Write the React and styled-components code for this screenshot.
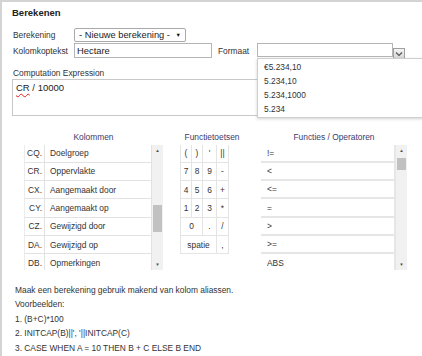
import styled, { createGlobalStyle } from 'styled-components';

const GlobalStyle = createGlobalStyle`
  html, body {
    margin: 0;
    padding: 0;
    background: #fff;
  }
  body {
    font-family: "Liberation Sans", Arial, sans-serif;
    font-size: 8.4px;
    color: #333;
  }
`;

const columns = [
  ['CQ.', 'Doelgroep'],
  ['CR.', 'Oppervlakte'],
  ['CX.', 'Aangemaakt door'],
  ['CY.', 'Aangemaakt op'],
  ['CZ.', 'Gewijzigd door'],
  ['DA.', 'Gewijzigd op'],
  ['DB.', 'Opmerkingen'],
];

const keys = [
  ['(', 1], [')', 1], ["'", 1], ['||', 1],
  ['7', 1], ['8', 1], ['9', 1], ['-', 1],
  ['4', 1], ['5', 1], ['6', 1], ['+', 1],
  ['1', 1], ['2', 1], ['3', 1], ['*', 1],
  ['0', 2], ['.', 1], ['/', 1],
  ['spatie', 3], [',', 1],
];

const operators = ['!=', '<', '<=', '=', '>', '>=', 'ABS'];

const formats = ['€5.234,10', '5.234,10', '5.234,1000', '5.234'];

function ScrollBar({ thumbTop, thumbHeight }) {
  return (
    <Track>
      <Arrow>▲</Arrow>
      <Thumb $top={thumbTop} $height={thumbHeight} />
      <Spacer />
      <Arrow>▼</Arrow>
    </Track>
  );
}

function App() {
  return (
    <>
      <GlobalStyle />
      <Panel>
        <Title>Berekenen</Title>

        <Form>
          <Row>
            <Label>Berekening</Label>
            <Select>
              <span>- Nieuwe berekening -</span>
              <Caret>▼</Caret>
            </Select>
          </Row>
          <Row $high>
            <Label>Kolomkoptekst</Label>
            <TextInput>Hectare</TextInput>
            <FormatLabel>Formaat</FormatLabel>
            <Combo>
              <ComboInput />
              <ComboButton>
                <svg width="8" height="6" viewBox="0 0 8 6">
                  <path d="M1 1.5 L4 4.5 L7 1.5" fill="none" stroke="#555" strokeWidth="1.2" />
                </svg>
              </ComboButton>
              <Dropdown>
                {formats.map((f) => (
                  <Option key={f}>{f}</Option>
                ))}
              </Dropdown>
            </Combo>
          </Row>
        </Form>

        <ExprLabel>Computation Expression</ExprLabel>
        <ExprBox>
          <Misspelled>CR</Misspelled> / 10000
        </ExprBox>

        <Sections>
          <Section $width={139}>
            <SectionTitle>Kolommen</SectionTitle>
            <ListBox>
              <Rows>
                {columns.map(([alias, name]) => (
                  <ColumnRow key={alias}>
                    <Alias>{alias}</Alias>
                    <ColName>{name}</ColName>
                  </ColumnRow>
                ))}
              </Rows>
              <ScrollBar thumbTop={49.5} thumbHeight={27} />
            </ListBox>
          </Section>

          <Section $width={64}>
            <SectionTitle>Functietoetsen</SectionTitle>
            <KeyGrid>
              {keys.map(([k, span], i) => (
                <Key key={i} $span={span}>{k}</Key>
              ))}
            </KeyGrid>
          </Section>

          <Section $width={146}>
            <SectionTitle>Functies / Operatoren</SectionTitle>
            <ListBox>
              <Rows>
                {operators.map((op) => (
                  <OpRow key={op}>{op}</OpRow>
                ))}
              </Rows>
              <ScrollBar thumbTop={2.5} thumbHeight={12} />
            </ListBox>
          </Section>
        </Sections>

        <Help>
          <div>Maak een berekening gebruik makend van kolom aliassen.</div>
          <div>Voorbeelden:</div>
          <div>1. (B+C)*100</div>
          <div>2. INITCAP(B)||', '||INITCAP(C)</div>
          <div>3. CASE WHEN A = 10 THEN B + C ELSE B END</div>
        </Help>
      </Panel>
    </>
  );
}

const Panel = styled.div`
  width: 422px;
  height: 356px;
  box-sizing: border-box;
  border-top: 2px solid #d4d4d4;
  border-left: 2px solid #d4d4d4;
  padding: 5px 0 0 10px;
  overflow: hidden;
`;

const Title = styled.div`
  font-weight: bold;
  font-size: 9.5px;
  line-height: 12px;
  color: #222;
`;

const Form = styled.div`
  margin-top: 9px;
  display: flex;
  flex-direction: column;
`;

const Row = styled.div`
  display: flex;
  align-items: center;
  height: ${(p) => (p.$high ? 15 : 14)}px;
  margin-top: ${(p) => (p.$high ? 1 : 0)}px;
`;

const Label = styled.div`
  width: 61px;
  padding-left: 1px;
  flex-shrink: 0;
  color: #333;
`;

const Select = styled.div`
  width: 112px;
  height: 14px;
  box-sizing: border-box;
  border: 1px solid #a9a9a9;
  border-radius: 2px;
  padding: 0 4px 0 4px;
  display: flex;
  align-items: center;
  justify-content: space-between;
  font-size: 9.3px;
  color: #222;
`;

const Caret = styled.span`
  font-size: 5.5px;
  color: #111;
`;

const TextInput = styled.div`
  width: 138px;
  height: 15px;
  box-sizing: border-box;
  border: 1px solid #b5b5b5;
  padding-left: 2px;
  display: flex;
  align-items: center;
  font-size: 9.4px;
  color: #222;
`;

const FormatLabel = styled.div`
  width: 39px;
  margin-left: 6px;
  color: #333;
`;

const Combo = styled.div`
  position: relative;
  display: flex;
  align-items: flex-end;
  height: 15px;
`;

const ComboInput = styled.div`
  width: 136px;
  height: 14px;
  box-sizing: border-box;
  border: 1px solid #b5b5b5;
  align-self: flex-start;
`;

const ComboButton = styled.div`
  width: 12px;
  height: 11px;
  box-sizing: border-box;
  border: 1px solid #a0a0a0;
  background: linear-gradient(#f4f4f4, #d8d8d8);
  display: flex;
  align-items: center;
  justify-content: center;
  margin-bottom: -1px;
`;

const Dropdown = styled.div`
  position: absolute;
  top: 15px;
  left: 0;
  width: 170px;
  box-sizing: border-box;
  background: #fff;
  border: 1px solid #cfcfcf;
  box-shadow: 0 1px 3px rgba(0, 0, 0, 0.18);
  padding: 1px 0 1px;
  z-index: 5;
`;

const Option = styled.div`
  padding-left: 6px;
  line-height: 14px;
  color: #333;
`;

const ExprLabel = styled.div`
  margin-top: 10px;
  padding-left: 1px;
  line-height: 10px;
  color: #333;
`;

const ExprBox = styled.div`
  margin-top: 1px;
  width: 396px;
  height: 37px;
  box-sizing: border-box;
  border: 1px solid #c8c8c8;
  padding: 2px 3px;
  font-size: 9.5px;
  line-height: 12px;
  color: #222;
`;

const Misspelled = styled.span`
  text-decoration: underline wavy #d22;
  text-decoration-thickness: 1px;
  text-underline-offset: 2px;
`;

const Sections = styled.div`
  display: flex;
  gap: 17px;
  margin-top: 16px;
  margin-left: 12px;
`;

const Section = styled.div`
  width: ${(p) => p.$width}px;
  flex-shrink: 0;
  display: flex;
  flex-direction: column;
`;

const SectionTitle = styled.div`
  text-align: center;
  line-height: 10px;
  height: 10px;
  margin-bottom: 2.5px;
  color: #3b3b6d;
`;

const ListBox = styled.div`
  display: flex;
  height: 125.5px;
  overflow: hidden;
`;

const Rows = styled.div`
  flex: 1;
  display: flex;
  flex-direction: column;
`;

const ColumnRow = styled.div`
  display: flex;
  height: 18.33px;
  flex-shrink: 0;
  box-sizing: border-box;
  border-bottom: 1px solid #e2e2e2;
  border-left: 1px solid #ececec;
  border-right: 1px solid #e2e2e2;
`;

const Alias = styled.div`
  width: 20px;
  box-sizing: border-box;
  border-right: 1px solid #e2e2e2;
  padding-right: 2px;
  text-align: right;
  display: flex;
  align-items: center;
  justify-content: flex-end;
  color: #333;
`;

const ColName = styled.div`
  padding-left: 5px;
  display: flex;
  align-items: center;
  color: #333;
`;

const OpRow = styled.div`
  height: 18.33px;
  flex-shrink: 0;
  box-sizing: border-box;
  border-bottom: 2px solid #e6e6e6;
  border-right: 2px solid #e6e6e6;
  padding-left: 6px;
  display: flex;
  align-items: center;
  color: #333;
`;

const Track = styled.div`
  width: 11px;
  flex-shrink: 0;
  background: #f1f1f1;
  display: flex;
  flex-direction: column;
  align-items: center;
`;

const Arrow = styled.div`
  height: 11px;
  width: 11px;
  font-size: 4.5px;
  color: #505050;
  display: flex;
  align-items: center;
  justify-content: center;
`;

const Thumb = styled.div`
  width: 9px;
  height: ${(p) => p.$height}px;
  margin-top: ${(p) => p.$top}px;
  background: #c1c1c1;
`;

const Spacer = styled.div`
  flex: 1;
`;

const KeyGrid = styled.div`
  display: grid;
  grid-template-columns: 10px 10px 13px 11px;
  grid-auto-rows: 17.33px;
  gap: 1px;
  padding: 0 1px 1px 1px;
  background: #e4e4e4;
  width: max-content;
`;

const Key = styled.div`
  grid-column: span ${(p) => p.$span};
  background: #fff;
  display: flex;
  align-items: center;
  justify-content: center;
  color: #333;
`;

const Help = styled.div`
  margin-top: 12.75px;
  padding-left: 3px;
  line-height: 14.5px;
  color: #333;
`;

export default App;
